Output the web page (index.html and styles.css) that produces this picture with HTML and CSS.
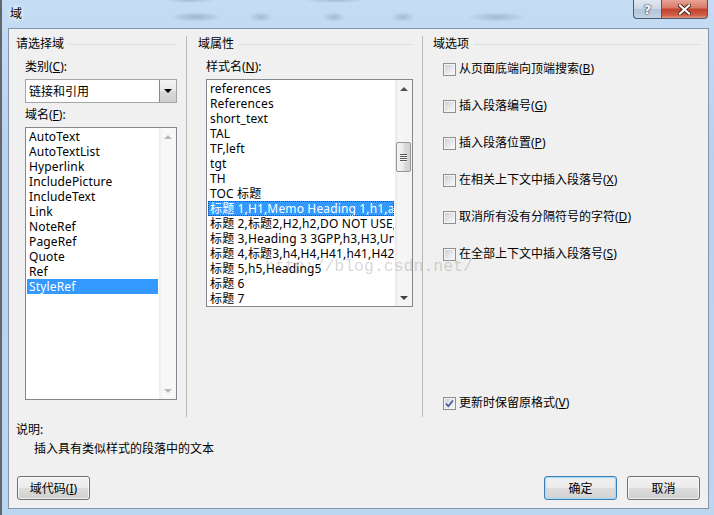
FILE: index.html
```html
<!DOCTYPE html>
<html lang="zh-CN">
<head>
  <meta charset="UTF-8">
  <title>域</title>
  <link rel="stylesheet" href="styles.css">
</head>
<body>
<div class="window">
  <div class="titlebar">
    <span class="title">域</span>
    <div class="caption">
      <span class="cap-btn help">?</span>
      <span class="cap-btn close">
        <svg width="13" height="11" viewBox="0 0 13 11">
          <path d="M2 1.5 L11 9.5 M11 1.5 L2 9.5" stroke="#4a2018" stroke-width="4" stroke-linecap="square"/>
          <path d="M2 1.5 L11 9.5 M11 1.5 L2 9.5" stroke="#fff" stroke-width="2.2" stroke-linecap="square"/>
        </svg>
      </span>
    </div>
  </div>

  <div class="client">
    <div class="columns">
      <div class="col col-pick">
        <div class="group-title"><span>请选择域</span></div>
        <div class="inner">
          <div class="label">类别(<u>C</u>):</div>
          <div class="combo">
            <span class="combo-text">链接和引用</span>
            <span class="combo-btn"><i class="arrow-down dark"></i></span>
          </div>
          <div class="label">域名(<u>F</u>):</div>
          <div class="listbox names">
            <div class="items">
              <div class="item">AutoText</div>
              <div class="item">AutoTextList</div>
              <div class="item">Hyperlink</div>
              <div class="item">IncludePicture</div>
              <div class="item">IncludeText</div>
              <div class="item">Link</div>
              <div class="item">NoteRef</div>
              <div class="item">PageRef</div>
              <div class="item">Quote</div>
              <div class="item">Ref</div>
              <div class="item selected">StyleRef</div>
            </div>
            <div class="scrollbar disabled">
              <div class="sb-btn"><i class="arrow-up"></i></div>
              <div class="sb-track"></div>
              <div class="sb-btn"><i class="arrow-down"></i></div>
            </div>
          </div>
        </div>
      </div>

      <div class="col col-props">
        <div class="group-title"><span>域属性</span></div>
        <div class="inner">
          <div class="label">样式名(<u>N</u>):</div>
          <div class="listbox styles">
            <div class="items">
              <div class="item">references</div>
              <div class="item">References</div>
              <div class="item">short_text</div>
              <div class="item">TAL</div>
              <div class="item">TF,left</div>
              <div class="item">tgt</div>
              <div class="item">TH</div>
              <div class="item">TOC 标题</div>
              <div class="item selected focus">标题 1,H1,Memo Heading 1,h1,app heading 1,l1</div>
              <div class="item">标题 2,标题2,H2,h2,DO NOT USE,Heading 2 Hidden</div>
              <div class="item">标题 3,Heading 3 3GPP,h3,H3,Underrubrik2</div>
              <div class="item">标题 4,标题3,h4,H4,H41,h41,H42,h42</div>
              <div class="item">标题 5,h5,Heading5</div>
              <div class="item">标题 6</div>
              <div class="item">标题 7</div>
            </div>
            <div class="scrollbar">
              <div class="sb-btn"><i class="arrow-up dark"></i></div>
              <div class="sb-track"><div class="sb-thumb"><span></span><span></span><span></span><span></span></div></div>
              <div class="sb-btn"><i class="arrow-down dark"></i></div>
            </div>
          </div>
        </div>
      </div>

      <div class="col col-opts">
        <div class="group-title"><span>域选项</span></div>
        <div class="inner opts">
          <div class="check"><span class="box"></span><span>从页面底端向顶端搜索(<u>B</u>)</span></div>
          <div class="check"><span class="box"></span><span>插入段落编号(<u>G</u>)</span></div>
          <div class="check"><span class="box"></span><span>插入段落位置(<u>P</u>)</span></div>
          <div class="check"><span class="box"></span><span>在相关上下文中插入段落号(<u>X</u>)</span></div>
          <div class="check"><span class="box"></span><span>取消所有没有分隔符号的字符(<u>D</u>)</span></div>
          <div class="check"><span class="box"></span><span>在全部上下文中插入段落号(<u>S</u>)</span></div>
          <div class="check last"><span class="box checked">
            <svg width="11" height="11" viewBox="0 0 11 11"><path d="M2 5.5 L4.3 8.2 L9 2.5" fill="none" stroke="#43589a" stroke-width="1.7"/></svg>
          </span><span>更新时保留原格式(<u>V</u>)</span></div>
        </div>
      </div>
    </div>

    <div class="desc-title">说明:</div>
    <div class="desc">插入具有类似样式的段落中的文本</div>

    <div class="button-row">
      <button class="btn">域代码(<u>I</u>)</button>
      <button class="btn default push">确定</button>
      <button class="btn">取消</button>
    </div>
  </div>

  <div class="watermark">http://blog.csdn.net/</div>
</div>
</body>
</html>
```

FILE: styles.css
```css
* {
  box-sizing: border-box;
}
body {
  margin: 0;
  width: 714px;
  height: 515px;
  overflow: hidden;
  font-family: "Noto Sans", "Noto Sans CJK SC", sans-serif;
  font-size: 12px;
  color: #000;
  background: #bcd5ee;
}
.window {
  position: relative;
  width: 714px;
  height: 515px;
  display: flex;
  flex-direction: column;
  background:
    linear-gradient(to right, #62676d 0, #62676d 2px, transparent 2px),
    linear-gradient(#c4dcf4, #b9d2ec 30%, #bcd6ef);
}

/* title bar */
.titlebar {
  height: 28px;
  display: flex;
  align-items: flex-start;
  background:
    radial-gradient(ellipse 26px 5px at 196px 17px, rgba(90,110,140,.35), transparent),
    radial-gradient(ellipse 12px 5px at 261px 17px, rgba(90,110,140,.3), transparent),
    radial-gradient(ellipse 12px 5px at 334px 17px, rgba(90,110,140,.3), transparent),
    radial-gradient(ellipse 12px 5px at 403px 17px, rgba(90,110,140,.3), transparent),
    radial-gradient(ellipse 30px 5px at 497px 17px, rgba(90,110,140,.3), transparent),
    radial-gradient(ellipse 26px 3px at 190px 0, rgba(90,110,140,.3), transparent),
    radial-gradient(ellipse 32px 3px at 335px 0, rgba(90,110,140,.3), transparent);
}
.title {
  margin: 6px 0 0 10px;
  font-size: 12px;
  line-height: 16px;
  text-shadow: 0 0 4px #fff, 0 0 6px #fff;
}
.caption {
  margin-left: auto;
  margin-right: 6px;
  display: flex;
}
.cap-btn {
  height: 19px;
  display: flex;
  align-items: center;
  justify-content: center;
  border: 1px solid #4d5a6b;
  border-top: none;
}
.help {
  width: 28px;
  border-right: none;
  border-radius: 0 0 0 4px;
  background: linear-gradient(#dfe8f2, #c9d6e5 50%, #b3c4d8 51%, #c3d3e5);
  font-family: "DejaVu Sans", sans-serif;
  font-weight: bold;
  font-size: 13px;
  color: #fff;
  text-shadow: 0 0 1px #3a4658, 0 0 1px #3a4658, 0 0 2px #3a4658;
}
.close {
  width: 47px;
  border-radius: 0 0 4px 0;
  background: linear-gradient(#e6a394, #d87a66 45%, #c2412b 50%, #d0604a 85%, #e29a7c);
}

/* client area */
.client {
  flex: 1;
  margin: 0 5px 6px 8px;
  border: 1px solid #8495aa;
  background: #f0f0f0;
  display: flex;
  flex-direction: column;
}
.columns {
  display: flex;
  height: 381px;
  margin-top: 7px;
}
.col {
  display: flex;
  flex-direction: column;
}
.col-pick {
  width: 177px;
  padding: 0 9px 0 7px;
}
.col-props {
  width: 236px;
  padding: 0 9px 0 11px;
  border-left: 1px solid #b9b9b9;
}
.col-opts {
  flex: 1;
  padding: 0 7px 0 10px;
  border-left: 1px solid #b9b9b9;
}
.group-title {
  display: flex;
  align-items: center;
  height: 16px;
  line-height: 16px;
}
.group-title::after {
  content: "";
  flex: 1;
  height: 1px;
  margin-left: 5px;
  background: #d5dfe5;
}
.col-pick .inner {
  padding-left: 9px;
}
.col-props .inner {
  padding-left: 8px;
}
.label {
  height: 16px;
  line-height: 16px;
  margin-top: 7px;
}
.label + .combo,
.label + .listbox,
.combo + .label {
  margin-top: 4px;
}
u {
  text-decoration: underline;
  text-underline-offset: 1px;
}

/* combo box */
.combo {
  height: 24px;
  display: flex;
  align-items: center;
  background: #fff;
  border: 1px solid #a5a5a5;
}
.combo-text {
  flex: 1;
  padding-left: 3px;
}
.combo-btn {
  width: 17px;
  height: 22px;
  display: flex;
  align-items: center;
  justify-content: center;
  border-left: 1px solid #8a8a8a;
  background: linear-gradient(#f4f4f4, #e8e8e8 50%, #d8d8d8 51%, #cfcfcf);
}

/* arrows */
.arrow-down,
.arrow-up {
  width: 0;
  height: 0;
  border-left: 4px solid transparent;
  border-right: 4px solid transparent;
}
.arrow-down {
  border-top: 4px solid #b9b9b9;
}
.arrow-up {
  border-bottom: 4px solid #b9b9b9;
}
.arrow-down.dark {
  border-top-color: #404040;
}
.arrow-up.dark {
  border-bottom-color: #505050;
}
.combo-btn .arrow-down {
  border-top-color: #000;
}

/* list boxes */
.listbox {
  display: flex;
  background: #fff;
  border: 1px solid #828790;
  overflow: hidden;
}
.names {
  height: 273px;
}
.styles {
  height: 228px;
}
.items {
  flex: 1;
  min-width: 0;
  margin: 1px;
  overflow: hidden;
}
.item {
  height: 15px;
  line-height: 15px;
  padding-left: 2px;
  white-space: nowrap;
  overflow: hidden;
  letter-spacing: 0.15px;
}
.item.selected {
  background: #3399ff;
  color: #fff;
}
.item.focus {
  outline: 1px dotted #1c4f8c;
  outline-offset: -1px;
}
.scrollbar {
  width: 17px;
  display: flex;
  flex-direction: column;
  background: linear-gradient(to right, #e7e7e7, #f6f6f6 20%, #f3f3f3);
}
.scrollbar.disabled {
  background: linear-gradient(to right, #ececec, #f8f8f8 20%, #f6f6f6);
}
.sb-btn {
  height: 17px;
  display: flex;
  align-items: center;
  justify-content: center;
}
.sb-track {
  flex: 1;
}
.sb-thumb {
  margin: 45px 1px 0 1px;
  height: 30px;
  border: 1px solid #959595;
  border-radius: 2px;
  background: linear-gradient(to right, #f5f5f5, #e9e9e9 50%, #d9d9d9 51%, #d3d3d3);
  display: flex;
  flex-direction: column;
  align-items: center;
  justify-content: center;
  gap: 1px;
}
.sb-thumb span {
  width: 7px;
  height: 1px;
  background: #595959;
  box-shadow: 0 1px 0 #f5f5f5;
}

/* check boxes */
.opts {
  flex: 1;
  display: flex;
  flex-direction: column;
  padding: 9px 0 6px 10px;
}
.check {
  height: 16px;
  line-height: 16px;
  display: flex;
  align-items: center;
  gap: 3px;
  margin-bottom: 21px;
}
.check.last {
  margin-top: auto;
  margin-bottom: 0;
}
.box {
  width: 13px;
  height: 13px;
  flex: none;
  display: flex;
  align-items: center;
  justify-content: center;
  border: 1px solid #8e8f8f;
  background: linear-gradient(135deg, #c9ccd2, #eeeff1 70%, #f7f7f7);
  box-shadow: inset 0 0 0 1px #f4f4f4;
}

/* description */
.desc-title {
  margin-top: 5px;
  padding-left: 7px;
  height: 16px;
  line-height: 16px;
}
.desc {
  margin-top: 3px;
  padding-left: 25px;
  height: 16px;
  line-height: 16px;
}

/* buttons */
.button-row {
  display: flex;
  gap: 10px;
  margin-top: 19px;
  padding: 0 8px 0 8px;
}
.btn {
  width: 73px;
  height: 24px;
  padding: 0;
  font: inherit;
  color: #000;
  border: 1px solid #707070;
  border-radius: 3px;
  background: linear-gradient(#f2f2f2, #ebebeb 50%, #dddddd 51%, #cfcfcf);
  box-shadow: inset 0 0 0 1px rgba(255,255,255,.7);
}
.btn.push {
  margin-left: auto;
}
.btn.default {
  border-color: #3c7fb1;
  box-shadow: inset 0 0 0 1px #a7daf5, inset 0 0 2px 1px rgba(120,200,240,.4);
  background: linear-gradient(#f2f2f2, #ebebeb 50%, #dddddd 51%, #d4d4d4);
}

/* watermark overlay */
.watermark {
  position: absolute;
  left: 265px;
  top: 257px;
  font-family: "Liberation Mono", monospace;
  font-size: 16.5px;
  line-height: 20px;
  color: rgba(110,110,110,.28);
}
```
